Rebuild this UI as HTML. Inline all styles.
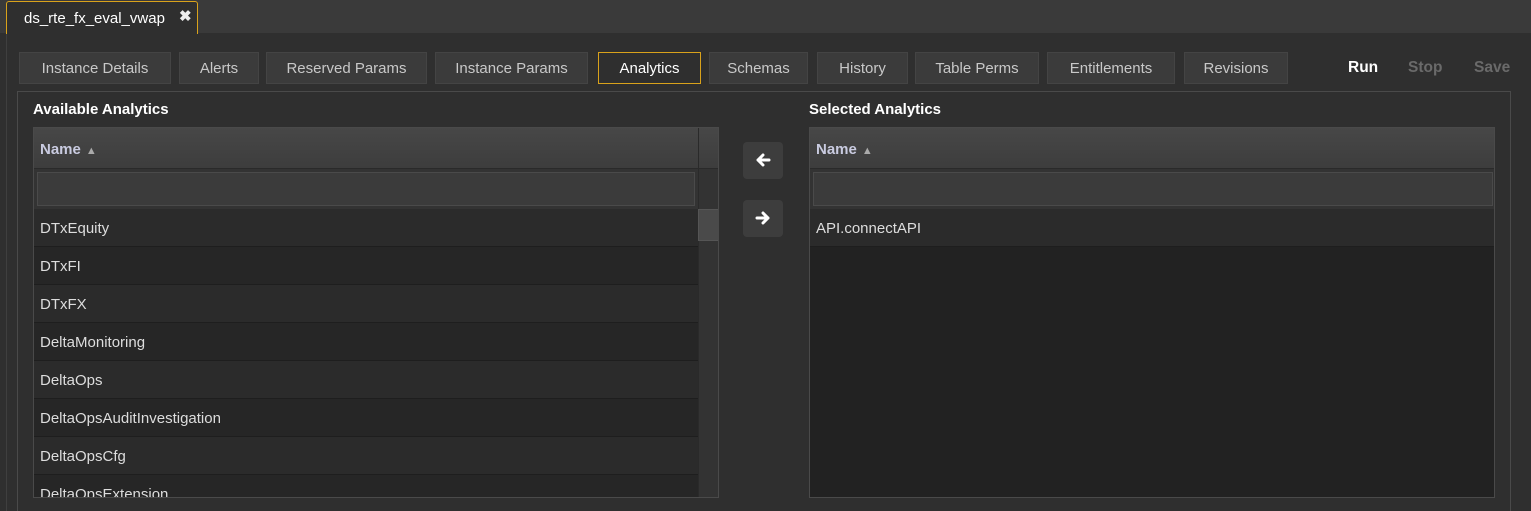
<!DOCTYPE html>
<html><head><style>
*{box-sizing:border-box;margin:0;padding:0}
html,body{width:1531px;height:511px;overflow:hidden}
body{background:#2f2f2f;font-family:"Liberation Sans",sans-serif;color:#ddd;position:relative}
.topbar{position:absolute;left:0;top:0;width:1531px;height:33px;background:#3a3a3a}
.ftab{position:absolute;left:6px;top:1px;width:192px;height:33px;border:1px solid #d9a21b;border-bottom:none;border-radius:3px 3px 0 0;background:#2f2f2f;color:#fff;font-size:15px;padding:8px 0 0 17px}
.ftab b{position:absolute;left:172px;top:5px;font-size:15px;color:#eee}
.main{position:absolute;left:6px;top:33px;width:1525px;height:478px;border-left:1px solid #3f3f3f}
.btn{position:absolute;top:52px;height:32px;background:#3b3b3b;border:1px solid #444;color:#c8c8c8;font-size:15px;text-align:center;line-height:31px}
.btn.act{border:1px solid #d9a21b;background:#2f2f2f;color:#fff}
.act2{position:absolute;top:59px;font-size:15.5px;font-weight:bold}
.panel{position:absolute;left:17px;top:91px;width:1494px;height:430px;border:1px solid #4a4a4a}
.title{position:absolute;top:101px;font-size:15px;font-weight:bold;color:#fff}
.grid{position:absolute;top:127px;height:371px;border:1px solid #4a4a4a;background:#262626;overflow:hidden}
.hdr{position:absolute;left:0;top:0;height:41px;background:linear-gradient(#474747,#3d3d3d);border-bottom:1px solid #2a2a2a;font-weight:bold;color:#c9cbe0;font-size:15px;padding:13px 0 0 6px}
.hdr span{font-size:11px;color:#aaa;margin-left:5px}
.flt{position:absolute;left:0;top:41px;height:40px;background:#333}
.flt div{position:absolute;left:3px;top:3px;right:3px;bottom:3px;border:1px solid #4a4a4a;background:#3b3b3b}
.row{position:absolute;left:0;height:38px;border-bottom:1px solid #1e1e1e;font-size:15px;color:#ddd;padding:11px 0 0 6px}
.arr{position:absolute;left:743px;width:40px;height:37px;background:#3d3d3d;border-radius:4px}
.arr svg{position:absolute;left:12px;top:10px}
</style></head><body>
<div class="topbar"></div>
<div class="main"></div>
<div class="ftab">ds_rte_fx_eval_vwap<b>✖</b></div>
<div class="btn" style="left:19px;width:152px">Instance Details</div>
<div class="btn" style="left:179px;width:80px">Alerts</div>
<div class="btn" style="left:266px;width:161px">Reserved Params</div>
<div class="btn" style="left:435px;width:153px">Instance Params</div>
<div class="btn act" style="left:598px;width:103px">Analytics</div>
<div class="btn" style="left:709px;width:99px">Schemas</div>
<div class="btn" style="left:817px;width:91px">History</div>
<div class="btn" style="left:915px;width:124px">Table Perms</div>
<div class="btn" style="left:1047px;width:128px">Entitlements</div>
<div class="btn" style="left:1184px;width:104px">Revisions</div>
<div class="act2" style="left:1348px;color:#fff">Run</div>
<div class="act2" style="left:1408px;color:#6a6a6a">Stop</div>
<div class="act2" style="left:1474px;color:#6a6a6a">Save</div>
<div class="panel"></div>
<div class="title" style="left:33px">Available Analytics</div>
<div class="title" style="left:809px">Selected Analytics</div>

<div class="grid" style="left:33px;width:686px">
 <div class="hdr" style="width:664px">Name<span>▲</span></div>
 <div class="hdr" style="left:664px;width:22px;padding:0;border-left:1px solid #2a2a2a"></div>
 <div class="flt" style="width:664px"><div></div></div>
 <div style="position:absolute;left:664px;top:41px;width:21px;height:330px;background:#333;border-left:1px solid #2a2a2a"></div>
 <div style="position:absolute;left:664px;top:81px;width:21px;height:32px;background:#4a4a4a;border:1px solid #555"></div>
 <div class="row" style="top:81px;width:664px;background:#2b2b2b">DTxEquity</div>
 <div class="row" style="top:119px;width:664px;background:#262626">DTxFI</div>
 <div class="row" style="top:157px;width:664px;background:#2b2b2b">DTxFX</div>
 <div class="row" style="top:195px;width:664px;background:#262626">DeltaMonitoring</div>
 <div class="row" style="top:233px;width:664px;background:#2b2b2b">DeltaOps</div>
 <div class="row" style="top:271px;width:664px;background:#262626">DeltaOpsAuditInvestigation</div>
 <div class="row" style="top:309px;width:664px;background:#2b2b2b">DeltaOpsCfg</div>
 <div class="row" style="top:347px;width:664px;background:#262626">DeltaOpsExtension</div>
</div>

<div class="arr" style="top:142px"><svg width="16" height="16" viewBox="0 0 16 16"><path d="M14 8H3M8 3L3 8L8 13" stroke="#fff" stroke-width="3" fill="none" stroke-linecap="round" stroke-linejoin="round"/></svg></div>
<div class="arr" style="top:200px"><svg width="16" height="16" viewBox="0 0 16 16"><path d="M2 8H13M8 3L13 8L8 13" stroke="#fff" stroke-width="3" fill="none" stroke-linecap="round" stroke-linejoin="round"/></svg></div>

<div class="grid" style="left:809px;width:686px;background:#222">
 <div class="hdr" style="width:686px">Name<span>▲</span></div>
 <div class="flt" style="width:686px"><div></div></div>
 <div class="row" style="top:81px;width:686px;background:#2b2b2b">API.connectAPI</div>
</div>
</body></html>
